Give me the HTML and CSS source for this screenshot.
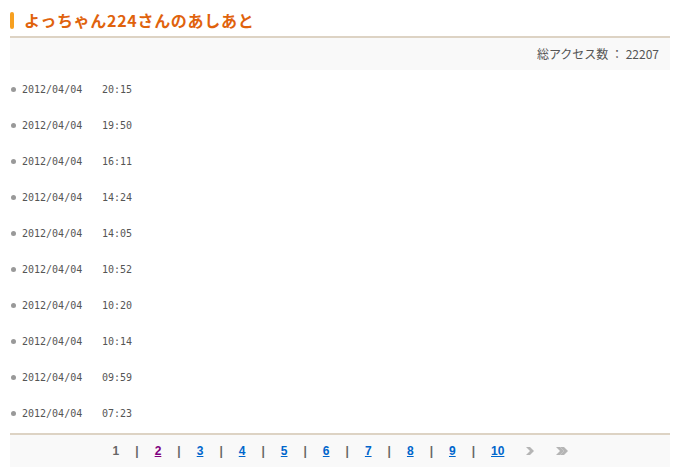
FILE: index.html
```html
<!DOCTYPE html>
<html lang="ja">
<head>
<meta charset="utf-8">
<link rel="stylesheet" href="styles.css">
</head>
<body>
<div class="wrap">
  <h1 class="title"><span class="mark"></span><span class="title-text">よっちゃん224さんのあしあと</span></h1>
  <div class="total">総アクセス数 ： 22207</div>
  <ul class="list">
    <li><span class="date">2012/04/04</span><span class="time">20:15</span></li>
    <li><span class="date">2012/04/04</span><span class="time">19:50</span></li>
    <li><span class="date">2012/04/04</span><span class="time">16:11</span></li>
    <li><span class="date">2012/04/04</span><span class="time">14:24</span></li>
    <li><span class="date">2012/04/04</span><span class="time">14:05</span></li>
    <li><span class="date">2012/04/04</span><span class="time">10:52</span></li>
    <li><span class="date">2012/04/04</span><span class="time">10:20</span></li>
    <li><span class="date">2012/04/04</span><span class="time">10:14</span></li>
    <li><span class="date">2012/04/04</span><span class="time">09:59</span></li>
    <li><span class="date">2012/04/04</span><span class="time">07:23</span></li>
  </ul>
  <div class="pager">
    <span class="cur">1</span><span class="sep">|</span>
    <a class="visited" href="#">2</a><span class="sep">|</span>
    <a href="#">3</a><span class="sep">|</span>
    <a href="#">4</a><span class="sep">|</span>
    <a href="#">5</a><span class="sep">|</span>
    <a href="#">6</a><span class="sep">|</span>
    <a href="#">7</a><span class="sep">|</span>
    <a href="#">8</a><span class="sep">|</span>
    <a href="#">9</a><span class="sep">|</span>
    <a href="#">10</a>
    <span class="arrow"><svg width="10" height="10" viewBox="0 0 10 10"><path d="M1 1 L5 1 L9 5 L5 9 L1 9 L5 5 Z" fill="#b5b5b5"/></svg></span>
    <span class="arrow2"><svg width="14" height="10" viewBox="0 0 14 10"><path d="M1 1 L5 1 L9 5 L5 9 L1 9 L5 5 Z" fill="#b5b5b5"/><path d="M5 1 L9 1 L13 5 L9 9 L5 9 L9 5 Z" fill="#b5b5b5"/></svg></span>
  </div>
</div>
</body>
</html>
```
FILE: styles.css
```css
html, body {
  margin: 0;
  padding: 0;
  background: #fff;
}
.wrap {
  width: 660px;
  margin: 0 10px;
  padding-top: 10px;
  font-family: "Noto Sans CJK JP", "DejaVu Sans", sans-serif;
}
.title {
  margin: 0;
  height: 26px;
  border-bottom: 2px solid #ddd3c4;
  display: flex;
  align-items: flex-start;
  font-size: 16px;
  font-weight: bold;
  color: #e0620c;
  line-height: 20px;
}
.mark {
  width: 4px;
  height: 17px;
  margin-top: 2px;
  border-radius: 2px;
  background: #f7a020;
  margin-right: 10px;
}
.title-text {
  letter-spacing: 0.7px;
}
.total {
  height: 32px;
  background: #f9f9f9;
  text-align: right;
  font-size: 12px;
  color: #555;
  line-height: 32px;
  padding-right: 11px;
}
.list {
  list-style: none;
  margin: 0;
  padding: 1px 0 2px;
  border-bottom: 2px solid #ddd3c4;
}
.list li {
  height: 36px;
  display: flex;
  align-items: center;
  font-family: "DejaVu Sans Mono", monospace;
  font-size: 10px;
  color: #555;
}
.list li::before {
  content: "";
  width: 5px;
  height: 5px;
  border-radius: 50%;
  background: #999;
  margin-left: 1px;
  margin-right: 6px;
}
.date {
  width: 80px;
}
.pager {
  height: 32px;
  background: #f9f9f9;
  display: flex;
  align-items: center;
  justify-content: center;
  font-family: "Liberation Sans", Arial, sans-serif;
  font-size: 12px;
  font-weight: bold;
  color: #666;
  padding-left: 2px;
}
.pager a {
  color: #0066cc;
  text-decoration: underline;
}
.pager a.visited {
  color: #800080;
}
.sep {
  margin: 0 16px;
  color: #666;
}
.arrow {
  display: flex;
  margin-left: 21px;
}
.arrow2 {
  display: flex;
  margin-left: 20px;
}
```
